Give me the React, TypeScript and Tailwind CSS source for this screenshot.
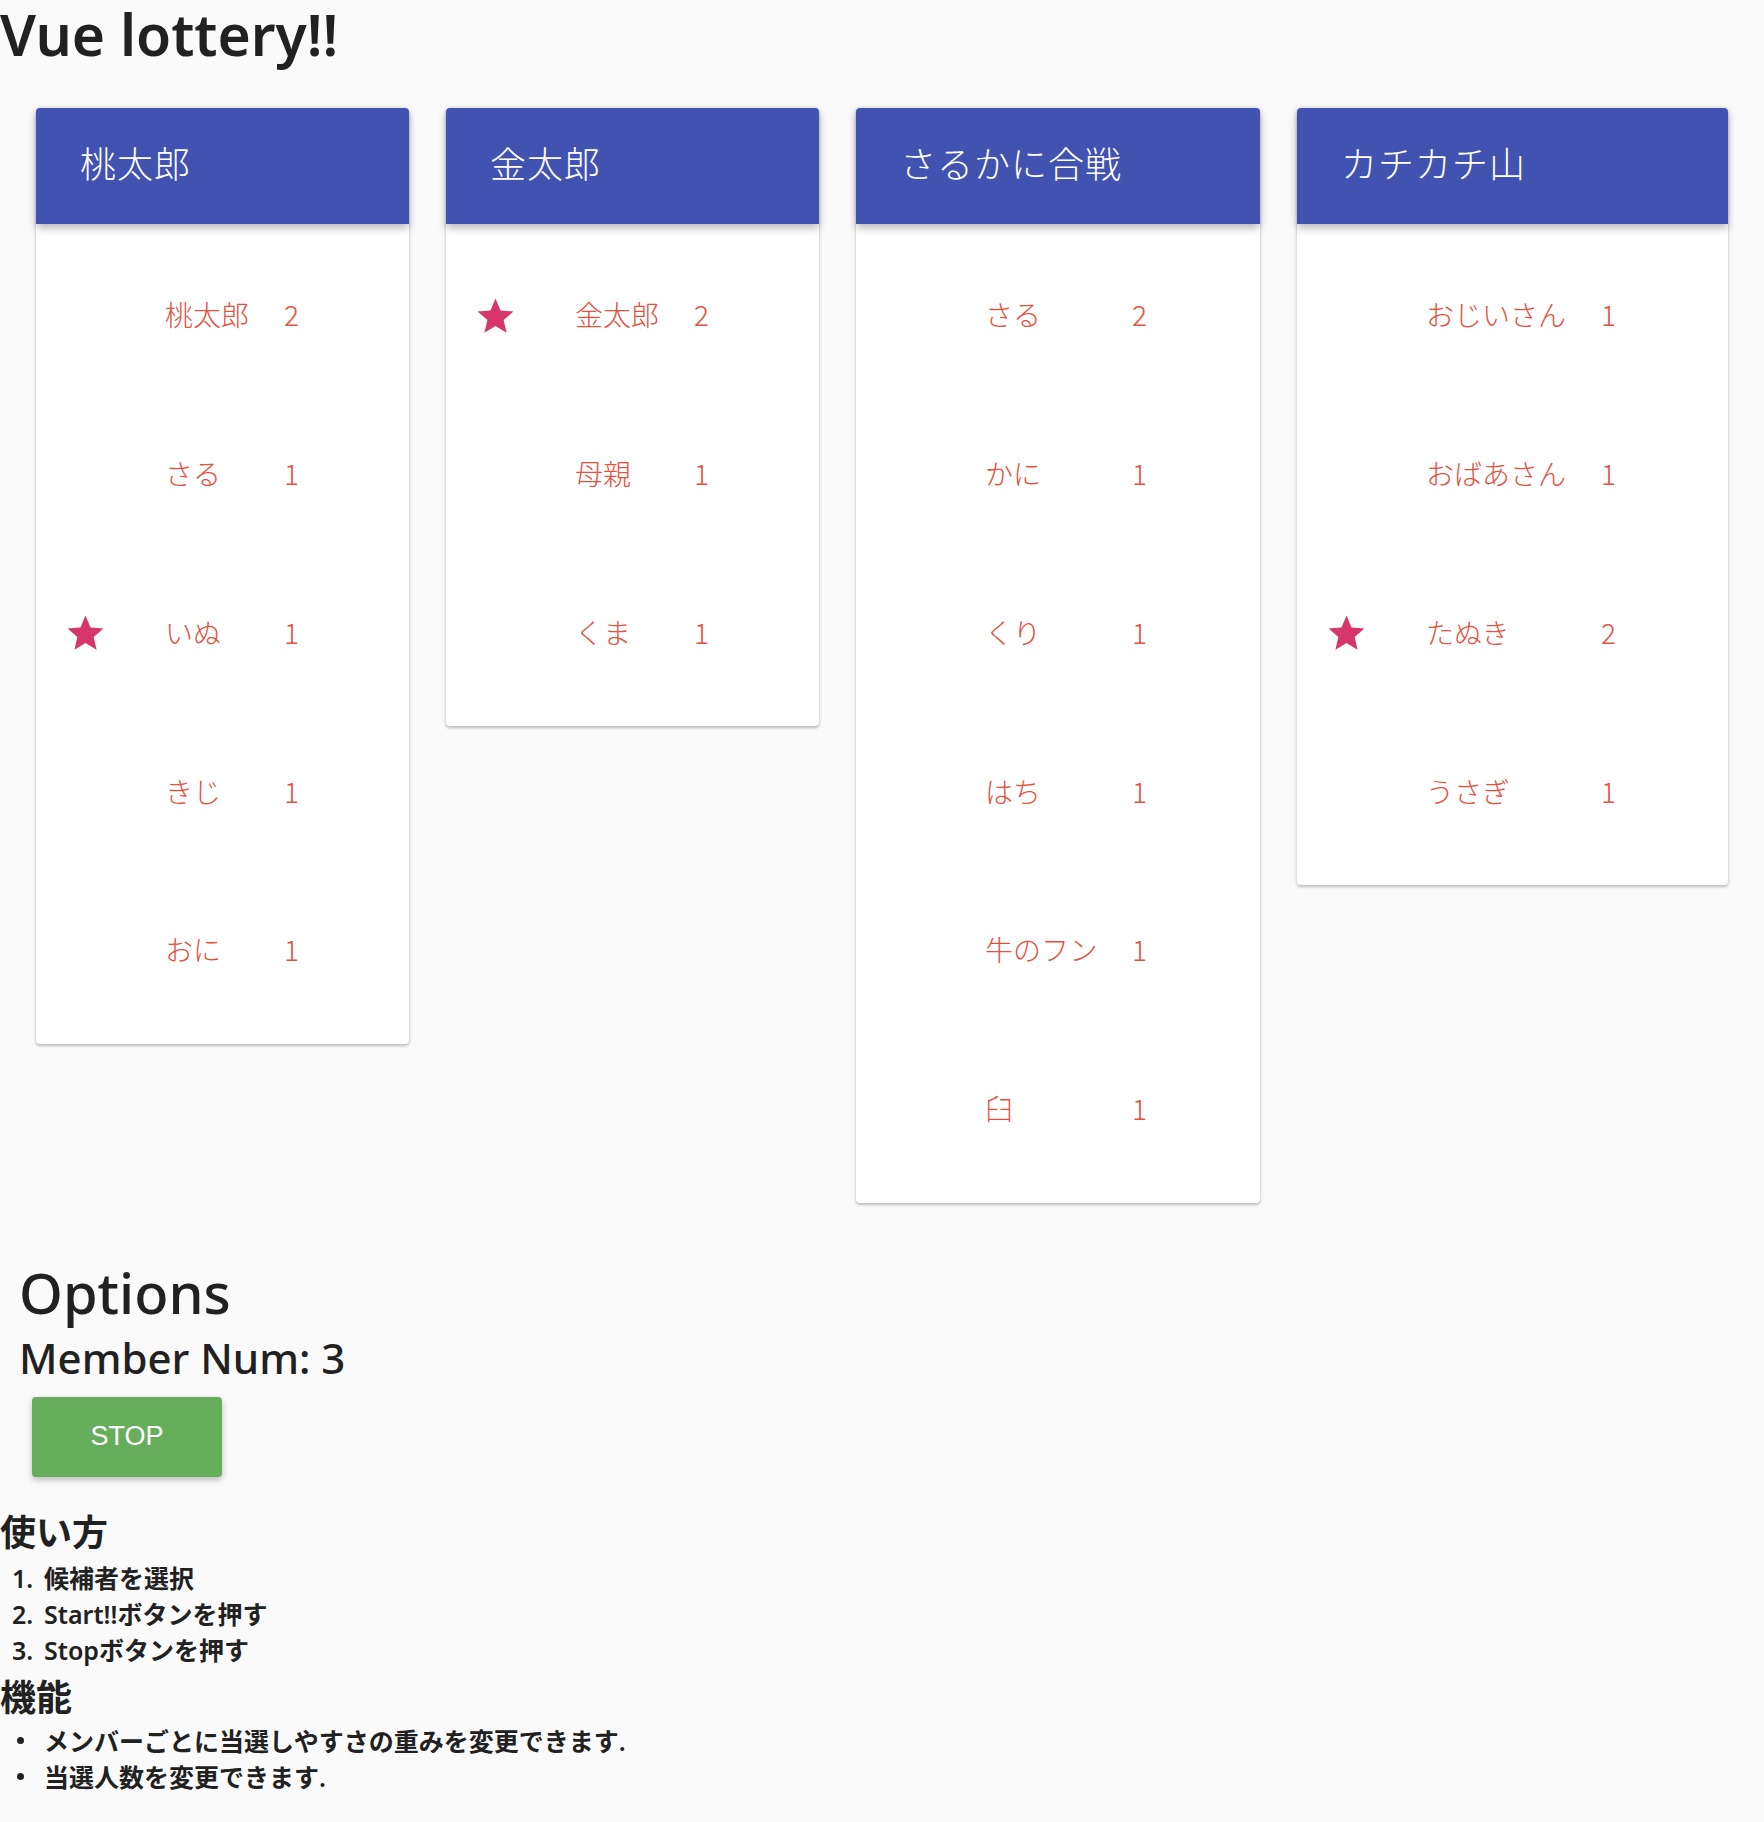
import React from "react";

type Row = { name: string; num: string; star?: boolean };
type Card = { title: string; w: string; col: string; rows: Row[] };

const cards: Card[] = [
  {
    title: "桃太郎",
    w: "w-[373px]",
    col: "w-[148px]",
    rows: [
      { name: "桃太郎", num: "2" },
      { name: "さる", num: "1" },
      { name: "いぬ", num: "1", star: true },
      { name: "きじ", num: "1" },
      { name: "おに", num: "1" },
    ],
  },
  {
    title: "金太郎",
    w: "w-[373px]",
    col: "w-[148px]",
    rows: [
      { name: "金太郎", num: "2", star: true },
      { name: "母親", num: "1" },
      { name: "くま", num: "1" },
    ],
  },
  {
    title: "さるかに合戦",
    w: "w-[404px]",
    col: "w-[176px]",
    rows: [
      { name: "さる", num: "2" },
      { name: "かに", num: "1" },
      { name: "くり", num: "1" },
      { name: "はち", num: "1" },
      { name: "牛のフン", num: "1" },
      { name: "臼", num: "1" },
    ],
  },
  {
    title: "カチカチ山",
    w: "w-[431px]",
    col: "w-[204px]",
    rows: [
      { name: "おじいさん", num: "1" },
      { name: "おばあさん", num: "1" },
      { name: "たぬき", num: "2", star: true },
      { name: "うさぎ", num: "1" },
    ],
  },
];

function Star() {
  return (
    <svg viewBox="0 0 24 24" className="w-[43px] h-[43px] ml-[28px]" fill="#d6366a">
      <path d="M12 17.27L18.18 21l-1.64-7.03L22 9.24l-7.19-.61L12 2 9.19 8.63 2 9.24l5.46 4.73L5.82 21z" />
    </svg>
  );
}

function LotteryCard({ card }: { card: Card }) {
  return (
    <div
      className={`${card.w} shrink-0 bg-white rounded-[4px] shadow-[0_2px_3px_rgba(0,0,0,0.22),0_0_4px_rgba(0,0,0,0.1)]`}
    >
      <div className="relative z-10 h-[116px] rounded-t-[4px] bg-[#4152b0] flex items-center pl-[44px] pb-[9px] shadow-[0_4px_8px_rgba(0,0,0,0.28)]">
        <span className="text-white text-[36px] leading-[44px] font-light tracking-[1px] font-['Noto_Sans_CJK_JP',sans-serif]">
          {card.title}
        </span>
      </div>
      <div className="py-[13px]">
        {card.rows.map((r, i) => (
          <div key={i} className="h-[158.75px] flex items-center pb-[4px]">
            <div className="w-[100px] flex items-center pt-[4px]">{r.star ? <Star /> : null}</div>
            <span
              className={`${card.col} pl-[29px] text-[28px] leading-[36px] font-light text-[#e4513f] font-['Noto_Sans_CJK_JP',sans-serif]`}
            >
              {r.name}
            </span>
            <span className="text-[28px] leading-[36px] font-light text-[#e4513f] font-['Noto_Sans_CJK_JP',sans-serif]">
              {r.num}
            </span>
          </div>
        ))}
      </div>
    </div>
  );
}

export default function App() {
  return (
    <div className="min-h-screen bg-[#fafafa] text-[#212121] font-['Noto_Sans','Noto_Sans_CJK_JP',sans-serif] pb-[28px]">
      <h1 className="text-[57px] leading-[64px] font-semibold pt-[2px] h-[66px]">Vue lottery!!</h1>

      <div className="flex items-start gap-[37px] pl-[36px] mt-[42px]">
        {cards.map((c, i) => (
          <LotteryCard key={i} card={c} />
        ))}
      </div>

      <div className="pl-[19px] mt-[57px]">
        <h2 className="text-[56px] leading-[64px] font-medium">Options</h2>
        <h3 className="mt-[10px] text-[42px] leading-[48px] font-medium">Member Num: 3</h3>
      </div>

      <button className="ml-[32px] mt-[15px] w-[190px] h-[80px] rounded-[4px] bg-[#66ae5c] text-white text-[27px] font-['Liberation_Sans',sans-serif] shadow-[0_3px_6px_rgba(0,0,0,0.25)]">
        STOP
      </button>

      <div className="font-['Noto_Sans','Noto_Sans_CJK_JP',sans-serif]">
        <h3 className="mt-[31px] text-[36px] leading-[44px] font-bold font-['Noto_Sans_CJK_JP',sans-serif]">使い方</h3>
        <ol className="mt-[8px]">
          {["候補者を選択", "Start!!ボタンを押す", "Stopボタンを押す"].map((t, i) => (
            <li key={i} className="flex text-[25px] leading-[36px] font-semibold">
              <span className="w-[44px] pl-[12px]">{i + 1}.</span>
              <span>{t}</span>
            </li>
          ))}
        </ol>
        <h3 className="mt-[5px] text-[36px] leading-[44px] font-bold font-['Noto_Sans_CJK_JP',sans-serif]">機能</h3>
        <ul className="mt-[6px]">
          {["メンバーごとに当選しやすさの重みを変更できます.", "当選人数を変更できます."].map((t, i) => (
            <li key={i} className="flex items-center text-[25px] leading-[36px] font-semibold">
              <span className="w-[44px] flex items-center pl-[17px]">
                <span className="w-[7px] h-[7px] rounded-full bg-[#212121]" />
              </span>
              <span>{t}</span>
            </li>
          ))}
        </ul>
      </div>
    </div>
  );
}
